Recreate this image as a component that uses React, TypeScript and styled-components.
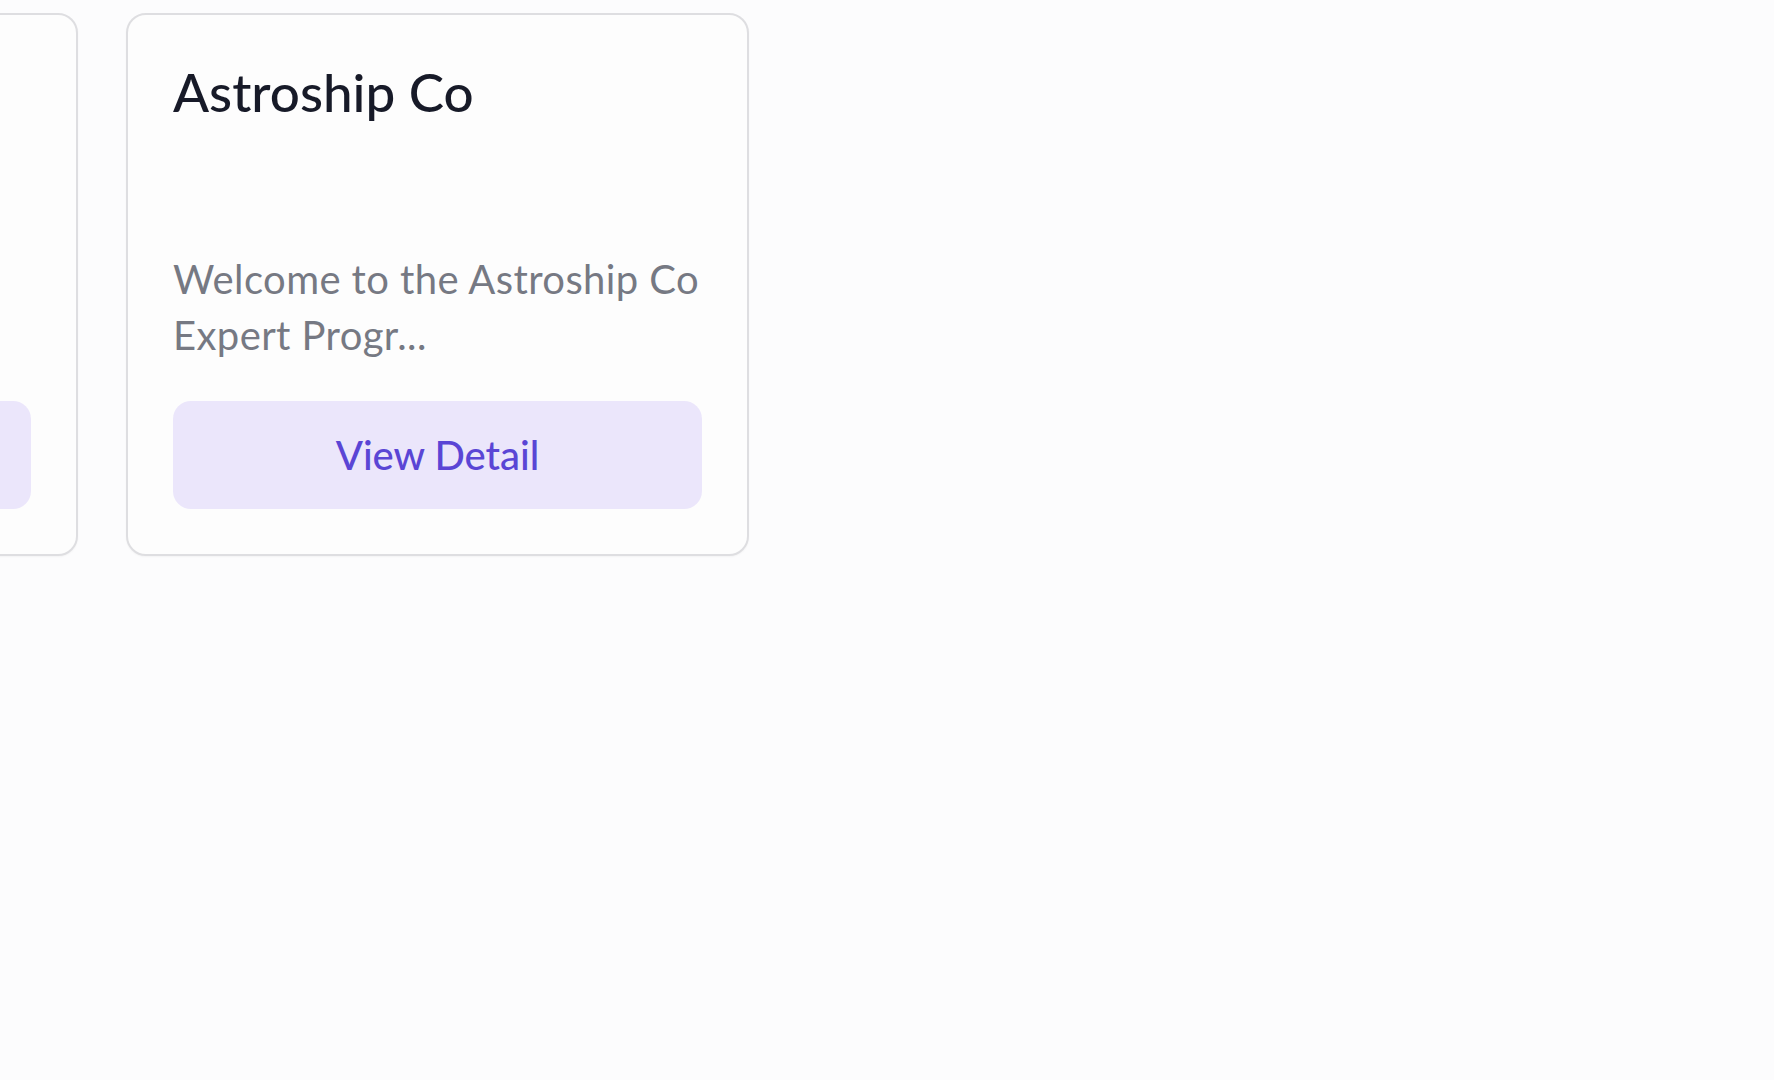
import React from "react";
import styled, { createGlobalStyle } from "styled-components";

const GlobalStyle = createGlobalStyle`
  html, body {
    margin: 0;
    padding: 0;
    background: #fcfcfd;
  }
  body {
    font-family: Lato, "Noto Sans", "Liberation Sans", sans-serif;
    overflow: hidden;
  }
`;

const Page = styled.main`
  width: 1774px;
  height: 1080px;
  overflow: hidden;
  background: #fcfcfd;
  padding-top: 13px;
  box-sizing: border-box;
`;

const Track = styled.div<{ $offset: number }>`
  display: flex;
  align-items: stretch;
  gap: 48px;
  margin-left: ${(p) => p.$offset}px;
`;

const Card = styled.article`
  flex: 0 0 auto;
  width: 623px;
  box-sizing: border-box;
  display: flex;
  flex-direction: column;
  padding: 45px;
  border: 2px solid #dedee1;
  border-radius: 20px;
  background: #fdfdfd;
  box-shadow: 0 1px 2px rgba(0, 0, 0, 0.04);
`;

const Title = styled.h3`
  margin: 0;
  min-height: 128px;
  font-size: 53px;
  line-height: 64px;
  font-weight: 500;
  color: #171a28;
`;

const Description = styled.p`
  flex: 1;
  margin: 63px 0 0;
  font-size: 40px;
  line-height: 56px;
  letter-spacing: 0.4px;
  font-weight: 400;
  color: #767983;
`;

const Button = styled.button`
  margin-top: 38px;
  height: 108px;
  border: none;
  border-radius: 18px;
  background: #ebe6fb;
  color: #5a45d5;
  font-family: inherit;
  font-size: 40px;
  font-weight: 500;
  cursor: pointer;
`;

const cards = [
  { title: "Expert Hub", desc: "Join us." },
  { title: "Astroship Co", desc: "Welcome to the Astroship Co Expert Progr..." },
];

export default function App() {
  return (
    <>
      <GlobalStyle />
      <Page>
        <Track $offset={-545}>
          {cards.map((c) => (
            <Card key={c.title}>
              <Title>{c.title}</Title>
              <Description>{c.desc}</Description>
              <Button>View Detail</Button>
            </Card>
          ))}
        </Track>
      </Page>
    </>
  );
}
